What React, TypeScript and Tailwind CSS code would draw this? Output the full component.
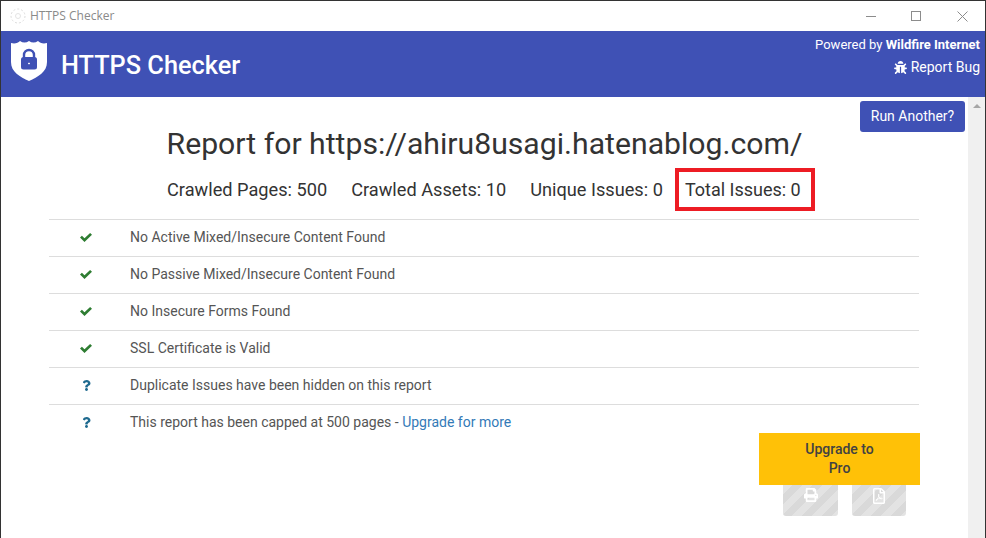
import { FaBug, FaPrint, FaQuestion, FaRegFilePdf } from 'react-icons/fa';

const rows = [
  { ok: true, text: 'No Active Mixed/Insecure Content Found' },
  { ok: true, text: 'No Passive Mixed/Insecure Content Found' },
  { ok: true, text: 'No Insecure Forms Found' },
  { ok: true, text: 'SSL Certificate is Valid' },
  { ok: false, text: 'Duplicate Issues have been hidden on this report' },
  { ok: false, text: 'This report has been capped at 500 pages - ', link: 'Upgrade for more' },
];

function Shield() {
  return (
    <svg width="36" height="41" viewBox="0 0 36 41">
      <path
        d="M0 3 C4 4 7 3 9 1 C12 3 15 3 18 1 C21 3 24 3 27 1 C29 3 32 4 36 3 L36 22 C36 32 27 37 18 41 C9 37 0 32 0 22 Z"
        fill="#fff"
      />
      <path d="M13 18 V15 A5 5 0 0 1 23 15 V18" fill="none" stroke="#3f51b5" strokeWidth="2.4" />
      <rect x="10" y="17" width="16" height="12.5" rx="2.5" fill="#3f51b5" />
      <path d="M17.2 23.5h1.6M18 22.7v1.6" stroke="#fff" strokeWidth="1" />
    </svg>
  );
}

function TitleBar() {
  return (
    <div className="flex h-[30px] shrink-0 items-center bg-white">
      <svg className="ml-[9px]" width="16" height="16" viewBox="0 0 16 16">
        <circle cx="8" cy="8" r="7" fill="none" stroke="#ddd" strokeWidth="1" strokeDasharray="2 2" />
        <circle cx="8" cy="8" r="2.5" fill="none" stroke="#e4e4e4" strokeWidth="1" />
      </svg>
      <span className="ml-[4px] text-xs text-[#8a8a8a] font-['Open_Sans',sans-serif]">HTTPS Checker</span>
      <div className="ml-auto flex items-center text-[#8c8c8c]">
        <div className="mr-[35px] h-px w-[10px] bg-[#8c8c8c]" />
        <div className="mr-[36px] h-[10px] w-[10px] border border-[#8c8c8c]" />
        <svg className="mr-[17px]" width="11" height="11" viewBox="0 0 11 11">
          <path d="M0.5 0.5L10.5 10.5M10.5 0.5L0.5 10.5" stroke="#8c8c8c" strokeWidth="1" />
        </svg>
      </div>
    </div>
  );
}

function Header() {
  return (
    <header className="flex h-[66px] shrink-0 bg-[#3f51b5] text-white">
      <div className="ml-[10px] mt-[9px]">
        <Shield />
      </div>
      <h1 className="ml-[14px] mt-[17px] text-[25.3px] leading-[36px] font-medium">HTTPS Checker</h1>
      <div className="ml-auto mr-[5px] mt-[5px] text-right text-[13px] leading-[18px]">
        <div>
          Powered by <span className="font-bold">Wildfire Internet</span>
        </div>
        <div className="mt-[3px] flex items-center justify-end gap-[4px] text-sm">
          <FaBug className="text-[13px]" />
          <span>Report Bug</span>
        </div>
      </div>
    </header>
  );
}

function ResultRow({ ok, text, link }: { ok: boolean; text: string; link?: string }) {
  return (
    <div className="flex h-[37px] items-center border-t border-[#dddddd] pb-[2px] text-sm text-[#555555]">
      <div className="flex w-[74px] justify-center">
        {ok ? (
          <svg width="12" height="9" viewBox="0 0 12 9">
            <path d="M0 4.6L1.9 2.8L4.5 5.2L10.1 0L12 1.8L4.5 9Z" fill="#2e7d32" />
          </svg>
        ) : (
          <FaQuestion className="text-[11px] text-[#1f6a8f]" />
        )}
      </div>
      <div className="ml-[7px]">
        {text}
        {link && <a className="text-[#337ab7]">{link}</a>}
      </div>
    </div>
  );
}

export default function App() {
  return (
    <div className="flex h-[538px] w-[986px] flex-col overflow-hidden border-x border-t border-[#333333] bg-white font-['Roboto',sans-serif]">
      <TitleBar />
      <Header />
      <div className="flex min-h-0 flex-1">
        <main className="relative flex-1 text-[#333333]">
          <button className="absolute right-[3px] top-[4px] h-[31px] w-[105px] rounded-[3px] bg-[#3f51b5] pb-[2px] text-sm text-white">
            Run Another?
          </button>
          <h2 className="pt-[26px] text-center text-[30.2px] leading-[42px]">
            Report for https://ahiru8usagi.hatenablog.com/
          </h2>
          <div className="mt-[3px] flex items-center pl-[166px] text-[18.2px] leading-[24px]">
            <span>Crawled Pages: 500</span>
            <span className="ml-[24px]">Crawled Assets: 10</span>
            <span className="ml-[24px]">Unique Issues: 0</span>
            <span className="ml-[12px] flex h-[43px] w-[140px] items-center border-[4px] border-[#ed1c24] pl-[6px] text-[18px]">Total Issues: 0</span>
          </div>
          <div className="ml-[48px] mr-[49px] mt-[8px]">
            {rows.map((row) => (
              <ResultRow key={row.text} {...row} />
            ))}
          </div>
          <div className="ml-auto mr-[48px] mt-[-8px] flex w-[161px] flex-col">
            <button className="h-[52px] w-[161px] bg-[#ffc107] text-sm leading-[19px] font-medium text-[#424242]">
              Upgrade to
              <br />
              Pro
            </button>
            <div className="ml-[24px] flex gap-[14px]">
              <div className="flex h-[31px] w-[55px] items-start justify-center rounded-b-[3px] bg-[repeating-linear-gradient(135deg,#e3e3e3_0px,#e3e3e3_7px,#d9d9d9_7px,#d9d9d9_14px)] pt-[3px] text-white">
                <FaPrint className="text-[14px]" />
              </div>
              <div className="flex h-[31px] w-[54px] items-start justify-center rounded-b-[3px] bg-[repeating-linear-gradient(135deg,#e3e3e3_0px,#e3e3e3_7px,#d9d9d9_7px,#d9d9d9_14px)] pt-[3px] text-white">
                <FaRegFilePdf className="text-[16px]" />
              </div>
            </div>
          </div>
        </main>
        <div className="w-[17px] shrink-0 bg-[#f0f0f0] pt-[7px]">
          <svg className="mx-auto" width="8" height="4" viewBox="0 0 8 4">
            <path d="M4 0L8 4H0Z" fill="#a6a6a6" />
          </svg>
        </div>
      </div>
    </div>
  );
}
